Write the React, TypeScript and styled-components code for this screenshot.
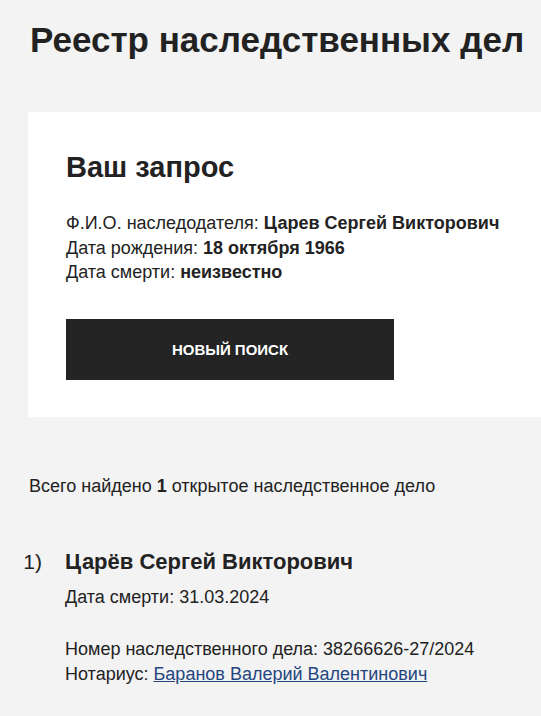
import React from 'react';
import styled, {createGlobalStyle} from 'styled-components';

const GlobalStyle = createGlobalStyle`
  html, body {
    margin: 0;
    padding: 0;
    background: #f3f3f3;
    color: #222222;
    font-family: "Liberation Sans", Arial, sans-serif;
  }
`

const Page = styled.div`
  width: 541px;
  height: 716px;
  overflow: hidden;
`
const Title = styled.h1`
  margin: 0;
  padding: 19px 0 0 30px;
  font-size: 35px;
  line-height: 42px;
  font-weight: 700;
  white-space: nowrap;
`
const RequestCard = styled.section`
  margin: 51px 0 0 28px;
  background: #ffffff;
  padding: 38px 0 37px 38px;
`
const CardTitle = styled.h2`
  margin: 0;
  font-size: 29px;
  line-height: 34px;
  font-weight: 700;
`
const Params = styled.div`
  margin-top: 27px;
  font-size: 18px;
  line-height: 24.5px;
`
const Button = styled.button`
  margin-top: 34px;
  width: 328px;
  height: 61px;
  border: none;
  background: #242424;
  color: #ffffff;
  font-family: "Liberation Sans", Arial, sans-serif;
  font-size: 15px;
  font-weight: 700;
  text-transform: uppercase;
  cursor: pointer;
`
const Summary = styled.p`
  margin: 0;
  padding: 57px 0 0 29px;
  font-size: 18px;
  line-height: 24px;
`
const Cases = styled.ol`
  list-style: none;
  margin: 50px 0 0;
  padding: 0;
`
const CaseItem = styled.li`
  display: grid;
  grid-template-columns: 65px 1fr;
`
const CaseIndex = styled.span`
  justify-self: end;
  padding-right: 23px;
  font-size: 21px;
  line-height: 28px;
`
const CaseName = styled.div`
  font-size: 22px;
  line-height: 28px;
  font-weight: 700;
`
const CaseLine = styled.div<{ gap?: number }>`
  margin-top: ${props => props.gap ?? 0}px;
  font-size: 18px;
  line-height: 24.5px;
`
const NotaryLink = styled.a`
  color: #24467f;
  text-decoration: underline;
`

const App = () => {
    return (
        <Page>
            <GlobalStyle/>
            <Title>Реестр наследственных дел</Title>
            <RequestCard>
                <CardTitle>Ваш запрос</CardTitle>
                <Params>
                    <div>Ф.И.О. наследодателя: <b>Царев Сергей Викторович</b></div>
                    <div>Дата рождения: <b>18 октября 1966</b></div>
                    <div>Дата смерти: <b>неизвестно</b></div>
                </Params>
                <Button>Новый поиск</Button>
            </RequestCard>
            <Summary>Всего найдено <b>1</b> открытое наследственное дело</Summary>
            <Cases>
                <CaseItem>
                    <CaseIndex>1)</CaseIndex>
                    <div>
                        <CaseName>Царёв Сергей Викторович</CaseName>
                        <CaseLine gap={9}>Дата смерти: 31.03.2024</CaseLine>
                        <CaseLine gap={28}>Номер наследственного дела: 38266626-27/2024</CaseLine>
                        <CaseLine>Нотариус: <NotaryLink href="#">Баранов Валерий Валентинович</NotaryLink></CaseLine>
                    </div>
                </CaseItem>
            </Cases>
        </Page>
    );
};

export default App
